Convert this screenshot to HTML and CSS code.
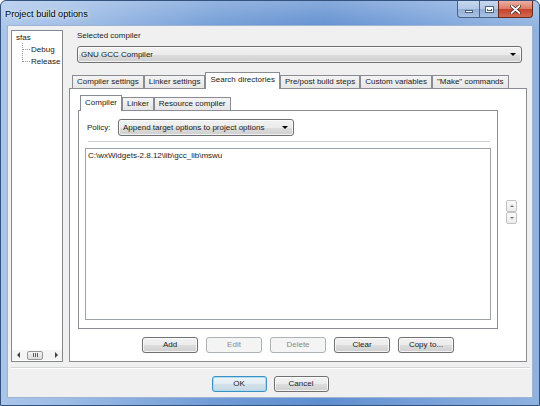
FILE: index.html
```html
<!DOCTYPE html>
<html>
<head>
<meta charset="utf-8">
<link rel="stylesheet" href="styles.css">
</head>
<body>
<div class="window">
  <div class="titlebar">
    <span class="title">Project build options</span>
    <div class="caption-btns">
      <div class="cbtn min"><span class="min-glyph"></span></div>
      <div class="cbtn max"><span class="max-glyph"></span></div>
      <div class="cbtn close">
        <svg width="11" height="9" viewBox="0 0 11 9"><path d="M1.5 1 L9.5 8 M9.5 1 L1.5 8" stroke="#3a2020" stroke-width="3.2" stroke-linecap="round"/><path d="M1.5 1 L9.5 8 M9.5 1 L1.5 8" stroke="#ffffff" stroke-width="1.8" stroke-linecap="round"/></svg>
      </div>
    </div>
  </div>
  <div class="client">
    <div class="main">
      <div class="tree">
        <div class="tree-body">
          <div class="node">sfas</div>
          <div class="node child"><span class="conn first"></span><span>Debug</span></div>
          <div class="node child"><span class="conn last"></span><span>Release</span></div>
        </div>
        <div class="hscroll">
          <span class="sarrow"><span class="tri-left"></span></span>
          <span class="sthumb"><span class="grip"></span><span class="grip"></span><span class="grip"></span></span>
          <span class="sspace"></span>
          <span class="sarrow"><span class="tri-right"></span></span>
        </div>
      </div>
      <div class="right">
        <div class="label">Selected compiler</div>
        <div class="combo main-combo"><span class="combo-text">GNU GCC Compiler</span><span class="caret"></span></div>
        <div class="tabs">
          <div class="tab">Compiler settings</div>
          <div class="tab">Linker settings</div>
          <div class="tab active">Search directories</div>
          <div class="tab">Pre/post build steps</div>
          <div class="tab">Custom variables</div>
          <div class="tab">&quot;Make&quot; commands</div>
        </div>
        <div class="tabpanel">
          <div class="inner-row">
            <div class="inner-nb">
              <div class="tabs small">
                <div class="tab active">Compiler</div>
                <div class="tab">Linker</div>
                <div class="tab">Resource compiler</div>
              </div>
              <div class="inner-panel">
                <div class="policy-row">
                  <span class="policy-label">Policy:</span>
                  <div class="combo policy-combo"><span class="combo-text">Append target options to project options</span><span class="caret"></span></div>
                </div>
                <div class="sep"></div>
                <div class="listbox">
                  <div class="item">C:\wxWidgets-2.8.12\lib\gcc_lib\mswu</div>
                </div>
              </div>
            </div>
            <div class="spin">
              <div class="spin-btn"><span class="tri-up"></span></div>
              <div class="spin-btn"><span class="tri-down"></span></div>
            </div>
          </div>
          <div class="btn-row">
            <div class="btn">Add</div>
            <div class="btn disabled">Edit</div>
            <div class="btn disabled">Delete</div>
            <div class="btn">Clear</div>
            <div class="btn">Copy to...</div>
          </div>
        </div>
      </div>
    </div>
    <div class="sepline"></div>
    <div class="dlg-btns">
      <div class="btn default">OK</div>
      <div class="btn">Cancel</div>
    </div>
  </div>
</div>
</body>
</html>
```

FILE: styles.css
```css
* { box-sizing: border-box; }

body {
  margin: 0;
  width: 540px;
  height: 406px;
  overflow: hidden;
  background: #ffffff;
  font-family: "Liberation Sans", Arial, sans-serif;
  font-size: 8px;
  color: #1a1a1a;
}

.window {
  width: 540px;
  height: 406px;
  display: flex;
  flex-direction: column;
  border: 1px solid #33527e;
  border-radius: 6px 6px 0 0;
  background:
    linear-gradient(to bottom, rgba(255,255,255,0.25), rgba(255,255,255,0) 30px),
    linear-gradient(to right, #a9c5ea 0%, #9dbce6 12%, #6f9bd6 40%, #5f8ed0 60%, #7ea6dc 85%, #8fb2e0 100%);
}

.titlebar {
  height: 24px;
  flex: none;
  display: flex;
  align-items: flex-start;
  padding-left: 4px;
}

.title {
  margin-top: 7px;
  font-size: 9.2px;
  line-height: 12px;
  color: #000000;
  text-shadow: 0 0 6px rgba(255,255,255,0.9), 0 0 3px rgba(255,255,255,0.9);
}

.caption-btns {
  margin-left: auto;
  margin-right: 6px;
  display: flex;
}

.cbtn {
  height: 17px;
  border: 1px solid #4a6488;
  border-top: none;
  display: flex;
  align-items: center;
  justify-content: center;
}

.cbtn.min {
  width: 22px;
  border-right: none;
  border-bottom-left-radius: 4px;
  background: linear-gradient(to bottom, #c7d8ee 0%, #b3c9e6 48%, #92afd7 52%, #a9c2e3 100%);
}

.cbtn.max {
  width: 19px;
  border-right: none;
  background: linear-gradient(to bottom, #c7d8ee 0%, #b3c9e6 48%, #92afd7 52%, #a9c2e3 100%);
}

.cbtn.close {
  width: 35px;
  border-bottom-right-radius: 4px;
  border-color: #6a2a20;
  background: linear-gradient(to bottom, #eab0a4 0%, #dc7c68 48%, #c6432c 52%, #d4694f 100%);
}

.min-glyph {
  width: 8px;
  height: 3px;
  margin-top: 5px;
  background: #ffffff;
  border: 1px solid #4c5f7a;
}

.max-glyph {
  width: 9px;
  height: 7px;
  border: 1px solid #4c5f7a;
  background: #ffffff;
  box-shadow: inset 0 2px 0 #ffffff, inset 0 0 0 1px #ffffff, inset 0 0 0 2px #4c5f7a;
}

.client {
  flex: 1;
  margin: 0 6px 7px 6px;
  border: 1px solid #9fb4d2;
  background: #f0f0f0;
  display: flex;
  flex-direction: column;
}

.main {
  display: flex;
  gap: 6px;
  padding: 4px 5px 0 3px;
}

/* tree */
.tree {
  width: 52px;
  flex: none;
  border: 1px solid #828790;
  background: #ffffff;
  display: flex;
  flex-direction: column;
}

.tree-body {
  flex: 1;
  padding: 1px 0 0 4px;
}

.node {
  height: 12px;
  line-height: 12px;
  white-space: nowrap;
}

.child {
  display: flex;
  align-items: flex-start;
  padding-left: 6px;
}

.conn {
  width: 8px;
  margin-right: 1px;
  border-left: 1px dotted #9a9a9a;
  border-bottom: 1px dotted #9a9a9a;
}

.conn.first {
  height: 7px;
  margin-top: -1px;
}

.conn.last {
  height: 13px;
  margin-top: -7px;
}

.hscroll {
  height: 10px;
  margin-bottom: 1px;
  display: flex;
  align-items: center;
  background: #f4f4f4;
}

.sarrow {
  width: 12px;
  height: 10px;
  display: flex;
  align-items: center;
  justify-content: center;
}

.tri-left {
  width: 0; height: 0;
  border-top: 3px solid transparent;
  border-bottom: 3px solid transparent;
  border-right: 3px solid #404040;
}

.tri-right {
  width: 0; height: 0;
  border-top: 3px solid transparent;
  border-bottom: 3px solid transparent;
  border-left: 3px solid #404040;
}

.sthumb {
  width: 16px;
  height: 9px;
  margin-left: 3px;
  border: 1px solid #979797;
  border-radius: 2px;
  background: linear-gradient(to bottom, #f3f3f3, #dcdcdc);
  display: flex;
  align-items: center;
  justify-content: center;
  gap: 1px;
}

.grip {
  width: 1px;
  height: 4px;
  background: #606060;
}

.sspace { flex: 1; }

/* right column */
.right {
  flex: 1;
  display: flex;
  flex-direction: column;
}

.label {
  height: 12px;
  line-height: 12px;
  padding-left: 8px;
}

.combo {
  height: 17px;
  border: 1px solid #707070;
  border-radius: 3px;
  background: linear-gradient(to bottom, #f2f2f2 0%, #ebebeb 50%, #dddddd 51%, #cfcfcf 100%);
  box-shadow: inset 0 0 0 1px rgba(255,255,255,0.7);
  display: flex;
  align-items: center;
  padding-left: 3px;
}

.combo-text {
  white-space: nowrap;
}

.caret {
  margin-left: auto;
  margin-right: 5px;
  width: 0; height: 0;
  border-left: 3px solid transparent;
  border-right: 3px solid transparent;
  border-top: 3px solid #000000;
}

.main-combo {
  margin: 4px 5px 0 8px;
}

.tabs {
  margin-top: 9px;
  margin-bottom: -1px;
  padding-left: 3px;
  height: 17px;
  display: flex;
  align-items: flex-end;
  position: relative;
  z-index: 1;
}

.tab {
  height: 13px;
  margin-bottom: 1px;
  padding: 0 4px;
  border: 1px solid #898c95;
  border-bottom: none;
  line-height: 12px;
  white-space: nowrap;
  background: linear-gradient(to bottom, #f4f4f4, #e6e6e6);
}

.tab.active {
  height: 17px;
  margin-bottom: 0;
  background: #ffffff;
  line-height: 14px;
}

.tabpanel {
  border: 1px solid #898c95;
  background: #ffffff;
  padding: 6px 0 8px 8px;
}

.inner-row {
  display: flex;
  align-items: center;
}

.inner-nb {
  width: 420px;
  display: flex;
  flex-direction: column;
}

.tabs.small {
  margin-top: 0;
  padding-left: 2px;
  height: 16px;
}

.tabs.small .tab {
  height: 13px;
  line-height: 12px;
}

.tabs.small .tab.active {
  height: 16px;
  line-height: 13px;
}

.inner-panel {
  border: 1px solid #898c95;
  background: #ffffff;
  padding: 8px 6px 8px 6px;
}

.policy-row {
  height: 17px;
  display: flex;
  align-items: center;
  padding-left: 2px;
}

.policy-label {
  width: 31px;
}

.policy-combo {
  width: 176px;
  padding-left: 4px;
}

.sep {
  height: 1px;
  margin: 5px 1px 0 3px;
  background: #cfcfcf;
}

.listbox {
  height: 172px;
  margin-top: 6px;
  border: 1px solid #9da2aa;
  background: #ffffff;
  padding: 1px 2px;
}

.item {
  line-height: 11px;
  white-space: nowrap;
}

.spin {
  margin-left: 8px;
  display: flex;
  flex-direction: column;
}

.spin-btn {
  width: 11px;
  height: 12px;
  border: 1px solid #c2c2c2;
  border-radius: 2px;
  background: linear-gradient(to bottom, #fafafa, #ececec);
  display: flex;
  align-items: center;
  justify-content: center;
}

.tri-up {
  width: 0; height: 0;
  border-left: 2px solid transparent;
  border-right: 2px solid transparent;
  border-bottom: 2px solid #707070;
}

.tri-down {
  width: 0; height: 0;
  border-left: 2px solid transparent;
  border-right: 2px solid transparent;
  border-top: 2px solid #707070;
}

.btn-row {
  margin: 8px 0 0 -8px;
  display: flex;
  justify-content: center;
  gap: 8px;
}

.btn {
  width: 56px;
  height: 16px;
  border: 1px solid #707070;
  border-radius: 3px;
  background: linear-gradient(to bottom, #f2f2f2 0%, #ebebeb 50%, #dddddd 51%, #cfcfcf 100%);
  box-shadow: inset 0 0 0 1px rgba(255,255,255,0.75);
  text-align: center;
  line-height: 14px;
  white-space: nowrap;
}

.btn.disabled {
  border-color: #adb2b5;
  background: #f4f4f4;
  box-shadow: none;
  color: #8a8a8a;
}

.sepline {
  margin: 5px 2px 0 3px;
  border-top: 1px solid #d5d5d5;
  border-bottom: 1px solid #ffffff;
}

.dlg-btns {
  margin-top: 7px;
  display: flex;
  justify-content: center;
  gap: 7px;
}

.dlg-btns .btn {
  width: 55px;
}

.btn.default {
  border-color: #3c8fc0;
  background: linear-gradient(to bottom, #eef5f9 0%, #e2ecf2 50%, #d2e1ea 51%, #c8dae5 100%);
  box-shadow: inset 0 0 0 1px #a8dcf2;
}
```
